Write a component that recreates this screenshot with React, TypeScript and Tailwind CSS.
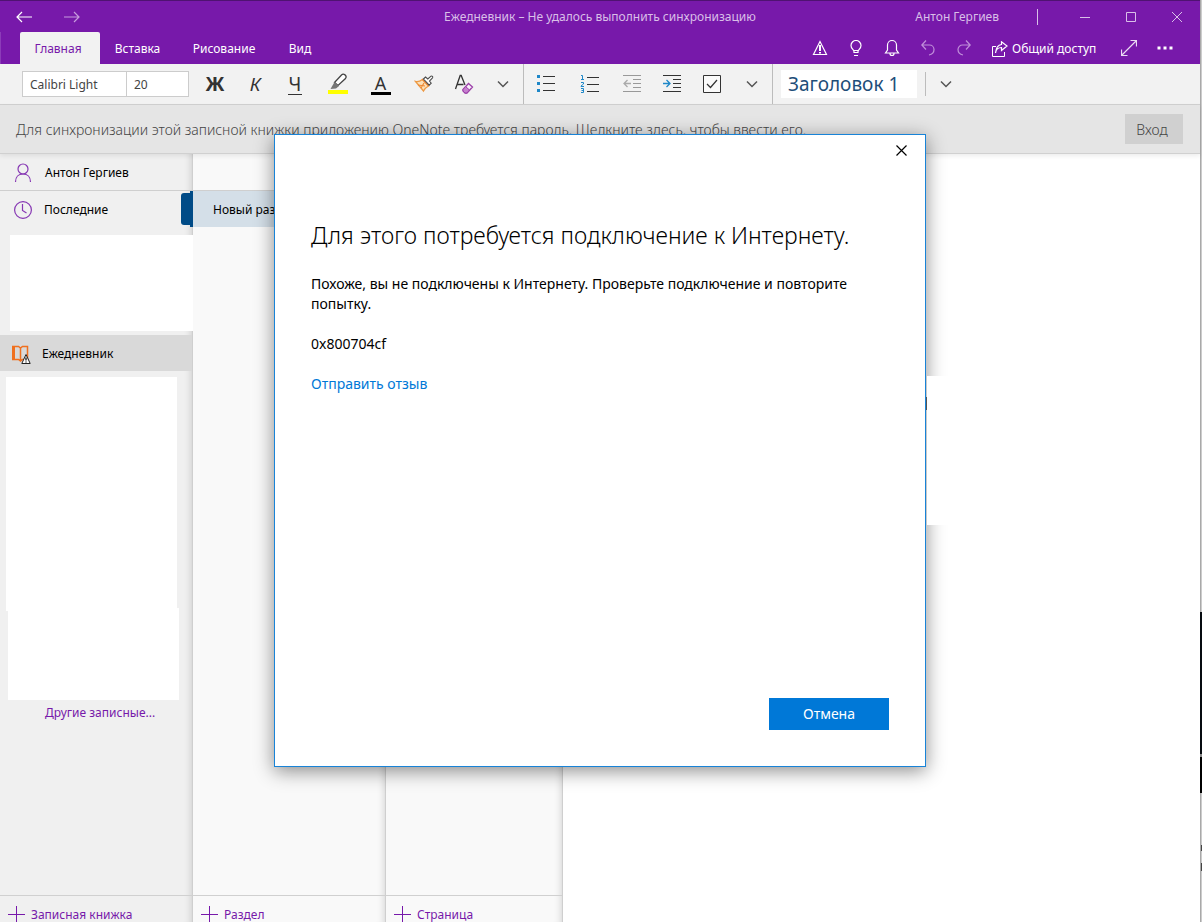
import type { ReactNode } from "react";

type IconProps = { children: ReactNode; w?: number; h?: number; className?: string };

function Icon({ children, w = 20, h = 20, className = "" }: IconProps) {
  return (
    <svg
      width={w}
      height={h}
      viewBox={`0 0 ${w} ${h}`}
      fill="none"
      stroke="currentColor"
      strokeWidth={1}
      aria-hidden="true"
      className={`shrink-0 ${className}`}
    >
      {children}
    </svg>
  );
}

function Tool({ label, className, children }: { label: string; className: string; children: ReactNode }) {
  return (
    <button type="button" aria-label={label} className={`flex h-full shrink-0 items-center justify-center text-[#333] ${className}`}>
      {children}
    </button>
  );
}

function Chevron() {
  return (
    <Icon w={12} h={8}>
      <path d="M1 1.5 6 6.5 11 1.5" stroke="#555" strokeWidth={1.5} />
    </Icon>
  );
}

function TitleBar() {
  return (
    <div className="grid h-[31px] grid-cols-[1fr_auto_1fr] items-center text-[#d9bfe8]">
      <div className="flex items-center">
        <button type="button" aria-label="Назад" className="ml-2 flex w-8 justify-center text-white">
          <Icon w={16} h={12}>
            <path d="M1 6h15M6 1 1 6l5 5" strokeWidth={1.2} />
          </Icon>
        </button>
        <button type="button" aria-label="Вперёд" className="ml-4 flex w-8 justify-center text-[#c79cdd]">
          <Icon w={16} h={12}>
            <path d="M0 6h15M10 1l5 5-5 5" strokeWidth={1.2} />
          </Icon>
        </button>
      </div>
      <div>Ежедневник – Не удалось выполнить синхронизацию</div>
      <div className="flex items-center justify-end">
        <div className="mr-[38px]">Антон Гергиев</div>
        <div className="mr-6 h-4 w-px bg-[#d9bfe8]" />
        <button type="button" aria-label="Свернуть" className="flex w-[46px] justify-center">
          <Icon w={10} h={10}>
            <path d="M0 5.5h10" />
          </Icon>
        </button>
        <button type="button" aria-label="Развернуть" className="flex w-[46px] justify-center">
          <Icon w={10} h={10}>
            <path d="M.5.5h9v9h-9z" />
          </Icon>
        </button>
        <button type="button" aria-label="Закрыть" className="flex w-[46px] justify-center">
          <Icon w={10} h={10}>
            <path d="m0 0 10 10M10 0 0 10" />
          </Icon>
        </button>
      </div>
    </div>
  );
}

function TabBar() {
  return (
    <div className="flex h-8 border-l border-[#8c3cb9] pl-[19px] text-white">
      <button type="button" className="w-20 rounded-t-xs bg-[#f2f2f2] pr-1 pt-px text-[#7719aa]">
        Главная
      </button>
      <button type="button" className="w-[75px] pt-px">Вставка</button>
      <button type="button" className="ml-1 w-[90px] pt-px">Рисование</button>
      <button type="button" className="ml-1 w-[54px] pt-px">Вид</button>
      <div className="ml-auto flex items-center">
        <button type="button" aria-label="Ошибка синхронизации" className="flex w-9 justify-center">
          <Icon w={16} h={16}>
            <path d="M8 1.500 1.500 14.500h13z" strokeWidth={1.200} />
            <path d="M8 5v6M8 12v1.500" strokeWidth={2} />
          </Icon>
        </button>
        <button type="button" aria-label="Подсказки" className="flex w-9 justify-center">
          <Icon w={12} h={16}>
            <path d="M4 12.500v-1C4 9.500 1 9 1 5.500a5 5 0 0 1 10 0C11 9 8 9.500 8 11.500v1zM4 10.500h4M4 15.500h4" strokeWidth={1.200} />
          </Icon>
        </button>
        <button type="button" aria-label="Уведомления" className="flex w-9 justify-center">
          <Icon w={16} h={18}>
            <path d="M3.500 11V6a4.500 4.500 0 0 1 9 0v5l2 3h-13zM6 14.500a2 2 0 0 0 4 0" strokeWidth={1.200} />
          </Icon>
        </button>
        <button type="button" aria-label="Отменить действие" className="flex w-9 justify-center text-[#c08fda]">
          <Icon w={14} h={16}>
            <path d="M5 .5.800 5 5 9.500M1 5h7.500a4.500 4.500 0 0 1 4.500 4.500c0 3-2 5-5 5.500" strokeWidth={1.200} />
          </Icon>
        </button>
        <button type="button" aria-label="Повторить действие" className="flex w-9 justify-center text-[#c08fda]">
          <Icon w={14} h={16}>
            <path d="M9 .5 13.200 5 9 9.500M13 5H5.500A4.500 4.500 0 0 0 1 9.500c0 3 2 5 5 5.500" strokeWidth={1.200} />
          </Icon>
        </button>
        <button type="button" className="ml-2.5 flex w-[109px] items-center gap-1 whitespace-nowrap pt-px">
          <Icon w={16} h={16}>
            <path d="M4 5.500H.500v10h12V11" />
            <path d="M3.500 12c.500-4 2.500-5.500 6-5.500V9.500L15 5 9.500.800V3.500C5.500 4 4 7 3.500 12z" strokeWidth={1.200} />
          </Icon>
          Общий доступ
        </button>
        <button type="button" aria-label="Полноэкранный режим" className="ml-2.5 flex w-9 justify-center text-[#ead9f3]">
          <Icon w={16} h={16}>
            <path d="M1 15 15 1M9.500.500h6v6M.500 9.500v6h6" strokeWidth={1.200} />
          </Icon>
        </button>
        <button type="button" aria-label="Параметры" className="mr-[17px] flex w-9 justify-center">
          <Icon w={16} h={4}>
            <path d="M.500.500h3v3h-3zM6.500.500h3v3h-3zM12.500.500h3v3h-3z" fill="currentColor" stroke="none" />
          </Icon>
        </button>
      </div>
    </div>
  );
}

function Toolbar() {
  return (
    <div className="flex h-[41px] items-center border-b border-[#d1d1d1] bg-[#f2f2f2] pl-[22px] text-[#444]">
      <input aria-label="Шрифт" defaultValue="Calibri Light" className="h-[26px] w-[105px] border border-[#ccc] bg-white pl-[7px]" />
      <input aria-label="Размер шрифта" defaultValue="20" className="-ml-px mr-1.5 h-[26px] w-[63px] border border-[#ccc] bg-white pl-[7px]" />
      <Tool label="Полужирный" className="w-10 text-[19px] font-bold">Ж</Tool>
      <Tool label="Курсив" className="w-10 text-[19px] italic">К</Tool>
      <Tool label="Подчёркнутый" className="w-10 text-[19px]">
        <span className="border-b border-[#333] px-px leading-[20px]">Ч</span>
      </Tool>
      <Tool label="Цвет выделения" className="ml-px w-[43px]">
        <Icon w={22} h={22}>
          <path d="M1 17h20v4H1z" fill="#ff0" stroke="none" />
          <path d="m7.500 9.500 7-7.500c2-2 6 .500 4 3.500l-7.500 7z" stroke="#444" strokeWidth={1.300} fill="#fff" />
          <path d="m7.500 9 4.500 4-3 2.500-5.500.500z" fill="#777" stroke="none" />
        </Icon>
      </Tool>
      <Tool label="Цвет текста" className="w-[43px]">
        <span className="w-5 border-b-3 border-black text-center text-[18px] leading-[18px]">А</span>
      </Tool>
      <Tool label="Формат по образцу" className="w-[43px]">
        <Icon w={20} h={18}>
          <path d="M1.500 6.500c3 .8 5-.5 7-2l6 6.500c-2 1-4 3-5 5z" fill="#fbe0b8" stroke="#ed9a45" strokeWidth={1.300} />
          <path d="m4 10 7 1M7 13l3-5M8 4l7 7" stroke="#ed8733" strokeWidth={1.200} />
          <path d="m9.500 4 2-2 2.300 2L17 1.200c1-.6 2.300.7 1.500 1.600L15.500 6l1.700 2.200-2 2z" fill="#fff" stroke="#4c4c4c" strokeWidth={1.100} />
        </Icon>
      </Tool>
      <Tool label="Очистить форматирование" className="w-[37px]">
        <Icon w={20} h={20}>
          <path d="M1.500 15 6.200 1.500h1L11 11M3 10.500h6.500" stroke="#333" strokeWidth={1.300} />
          <path d="m9 15.500 5.500-6 4 3.500-5.500 6h-2L9 17z" fill="#f7eef9" stroke="#9b3fa8" strokeWidth={1.300} />
          <path d="m9 15.500 2.500-3 4 3.500-2.500 3h-2L9 17z" fill="#c680cf" stroke="#9b3fa8" />
        </Icon>
      </Tool>
      <Tool label="Ещё форматирование" className="w-[41px]"><Chevron /></Tool>
      <div className="h-full w-px bg-[#bcbcbc]" />
      <Tool label="Маркированный список" className="w-11">
        <Icon w={18} h={18}>
          <path d="M0 0h3v3H0zM0 7h3v3H0zM0 14h3v3H0z" fill="#1e87c8" stroke="none" />
          <path d="M6 1.500h12M6 8.500h12M6 15.500h12" />
        </Icon>
      </Tool>
      <Tool label="Нумерованный список" className="w-11">
        <Icon w={20} h={20}>
          <path d="M7 3.500h12M7 10.500h12M7 17.500h12" />
          <path d="M1 1.500h1.500V6M1 5.500h3M1 8.500h2.500V10L1 12v.500h3M1 14.500h2.500v4H1M1.500 16.500h2" stroke="#1e87c8" />
        </Icon>
      </Tool>
      <Tool label="Уменьшить отступ" className="w-10">
        <Icon w={18} h={18}>
          <path d="M0 .500h18M10 4.500h8M10 8.500h8M10 12.500h8M0 16.500h18" stroke="#999" />
          <path d="M1 8.500h7M4.500 5 1 8.500 4.500 12" stroke="#aaa" strokeWidth={1.300} />
        </Icon>
      </Tool>
      <Tool label="Увеличить отступ" className="w-10">
        <Icon w={18} h={18}>
          <path d="M0 .500h18M10 4.500h8M10 8.500h8M10 12.500h8M0 16.500h18" />
          <path d="M0 8.500h7M3.500 5 7 8.500 3.500 12" stroke="#1e87c8" strokeWidth={1.300} />
        </Icon>
      </Tool>
      <Tool label="Дело" className="w-10">
        <Icon w={18} h={18}>
          <path d="M.500.500h17v17H.500z" fill="#fafafa" />
          <path d="m4 9 3.500 3.500L14 5" strokeWidth={1.200} />
        </Icon>
      </Tool>
      <Tool label="Другие списки" className="w-10"><Chevron /></Tool>
      <div className="h-full w-px bg-[#bcbcbc]" />
      <button type="button" className="ml-2 h-7 w-[136px] shrink-0 bg-white pl-[7px] text-left text-[19px] leading-7 text-[#1e4e79]">
        Заголовок 1
      </button>
      <div className="ml-2 h-6 w-px bg-[#bcbcbc]" />
      <Tool label="Стили заголовков" className="w-10"><Chevron /></Tool>
    </div>
  );
}

function Banner() {
  return (
    <div className="relative z-10 flex h-[49px] items-center justify-between border-b border-[#d0d0d0] bg-[#e5e5e5] pl-4 pr-[17px] text-[14px] text-[#444] shadow-[0_2px_5px_rgba(0,0,0,0.08)]">
      <p className="font-light">Для синхронизации этой записной книжки приложению OneNote требуется пароль. Щелкните здесь, чтобы ввести его.</p>
      <button type="button" className="h-[30px] w-[58px] bg-[#d0d0d0] pr-1 font-light">Вход</button>
    </div>
  );
}

function AddButton({ label }: { label: string }) {
  return (
    <button type="button" className="flex h-[27px] w-full shrink-0 gap-1.5 border-t border-[#d0d0d0] pl-2 pt-2.5 leading-[18px] text-[#7719aa]">
      <Icon w={17} h={17}>
        <path d="M8.500 0v17M0 8.500h17" />
      </Icon>
      {label}
    </button>
  );
}

const edge = "border-r border-[#cfcfcf] shadow-[inset_-9px_0_9px_-9px_rgba(0,0,0,0.18)]";

function Notebooks() {
  return (
    <nav className={`flex w-[193px] shrink-0 flex-col bg-[#f0f0f0] text-black ${edge}`}>
      <button type="button" className="flex h-[37px] items-center border-b border-[#cfcfcf] pl-3.5 pt-px text-left">
        <Icon w={18} h={20} className="mr-[13px] text-[#8637b3]">
          <circle cx="9" cy="6" r="5" strokeWidth={1.200} />
          <path d="M1.500 19c0-5 3-8 7.500-8s7.500 3 7.500 8" strokeWidth={1.200} />
        </Icon>
        Антон Гергиев
      </button>
      <div className="flex h-9 items-center pl-3.5">
        <button type="button" className="flex flex-1 items-center pt-px text-left">
          <Icon w={18} h={18} className="mr-3 text-[#8637b3]">
            <circle cx="9" cy="9" r="8.400" strokeWidth={1.200} />
            <path d="M8.500 3v6.500l4 2.500" strokeWidth={1.200} />
          </Icon>
          Последние
        </button>
        <div className="h-8 w-[9px] rounded-l-[3px] bg-[#004b87]" />
        <div className="-mr-px h-9 w-[3px] bg-[#004b87]" />
      </div>
      <div className="ml-2.5 -mr-px mt-2 h-24 bg-white" />
      <button type="button" className="mt-1 flex h-9 items-center bg-[#d9d9d9] pl-3 pt-0.5 text-left">
        <Icon w={19} h={19} className="mr-[11px]">
          <path d="M.500 1.500h6l2 1.500 2-1.500h5v13h-5l-2 1.500-2-1.500h-6zM8.500 3v12" stroke="#f0701f" strokeWidth={1.500} />
          <path d="M2 1.500v13" stroke="#f0701f" strokeWidth={2} />
          <path d="m14 9.500-4.200 9h8.400z" stroke="#222" fill="#fff" />
          <path d="M14 12.500v3M14 16.500v1" stroke="#222" strokeWidth={1.400} />
        </Icon>
        Ежедневник
      </button>
      <div className="ml-1.5 mt-1.5 h-[234px] w-[171px] bg-white" />
      <div className="-mt-[3px] ml-2 h-[92px] w-[171px] bg-white" />
      <a href="#notebooks" className="ml-[45px] mt-1 leading-[18px] text-[#7719aa]">Другие записные...</a>
      <div className="flex-1" />
      <AddButton label="Записная книжка" />
    </nav>
  );
}

function Dialog() {
  return (
    <div className="absolute inset-0 z-20 flex items-start justify-center pr-0.5 pt-[134px]">
      <section
        role="dialog"
        aria-labelledby="dialog-title"
        className="relative flex h-[633px] w-[652px] flex-col border border-[#1883d7] bg-white px-9 text-[14px] leading-5 text-black shadow-[0_4px_18px_rgba(0,0,0,0.45)]"
      >
        <div className="absolute left-full top-[241px] ml-0.5 h-[149px] w-6 bg-white" />
        <div className="absolute left-full top-[262px] ml-px h-[13px] w-px bg-[#555]" />
        <button type="button" aria-label="Закрыть окно" className="-mr-6 flex h-[30px] w-6 items-center justify-center self-end">
          <Icon w={11} h={11}>
            <path d="m.500.500 10 10M10.500.500l-10 10" strokeWidth={1.200} />
          </Icon>
        </button>
        <h1 id="dialog-title" className="mt-[54px] text-[23px] font-light leading-8">Для этого потребуется подключение к Интернету.</h1>
        <p className="mt-[23px]">Похоже, вы не подключены к Интернету. Проверьте подключение и повторите попытку.</p>
        <p className="mt-5">0x800704cf</p>
        <a href="#feedback" className="mt-5 self-start text-[#0078d7]">Отправить отзыв</a>
        <button type="button" className="mb-9 mt-auto h-8 w-[120px] self-end bg-[#0078d7] text-white">Отмена</button>
      </section>
    </div>
  );
}

export default function App() {
  return (
    <div className="relative flex h-screen overflow-hidden bg-white font-['Noto_Sans','Open_Sans',sans-serif] text-[12px]">
      <div className="flex min-w-0 flex-1 flex-col">
        <header className="shrink-0 border-t border-[#4f1272] bg-[#7719aa]">
          <TitleBar />
          <TabBar />
          <Toolbar />
        </header>
        <Banner />
        <main className="flex min-h-0 flex-1">
          <Notebooks />
          <section aria-label="Разделы" className={`flex w-[193px] shrink-0 flex-col bg-[#f9f9f9] ${edge}`}>
            <div className="h-[37px] border-b border-[#cfcfcf]" />
            <button type="button" className="h-9 bg-[#d4dfe8] pl-5 pt-px text-left">Новый раздел 1</button>
            <div className="flex-1" />
            <AddButton label="Раздел" />
          </section>
          <section aria-label="Страницы" className={`flex w-[177px] shrink-0 flex-col bg-[#f9f9f9] ${edge}`}>
            <div className="flex-1" />
            <AddButton label="Страница" />
          </section>
          <div className="flex-1 bg-white" />
        </main>
      </div>
      <div className="flex w-0.5 shrink-0 flex-col border-l border-[#a9a9a9] bg-[#ccc] pt-[612px]">
        <div className="-ml-px h-[142px] bg-[#060b10]" />
        <div className="-ml-px h-[3px] bg-[#888]" />
        <div className="-ml-px h-9 bg-black" />
        <div className="mt-[52px] h-1.5 bg-[#444]" />
        <div className="mt-3 h-2 bg-[#444]" />
      </div>
      <Dialog />
    </div>
  );
}
